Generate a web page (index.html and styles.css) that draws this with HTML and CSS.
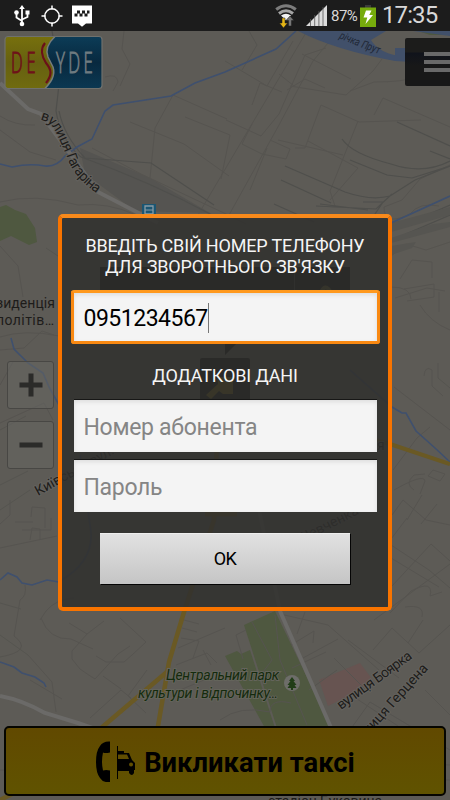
FILE: index.html
```html
<!DOCTYPE html>
<html lang="uk">
<head>
    <meta charset="UTF-8">
    <meta name="viewport" content="width=device-width, initial-scale=1.0">
    <title>DeSyde таксі</title>
    <link rel="stylesheet" href="styles.css">
</head>
<body>

<div class="screen">
    <header class="status-bar">
        <div class="status-left">
            <svg width="16" height="22" viewBox="0 0 16 22">
                <g fill="none" stroke="#fff" stroke-width="1.8"><path d="M8 3v15M2.500 8v4.500L8 16M13.500 9v3L8 14.500"/></g>
                <path d="M8 0l2.800 4H5.200zM11.500 5.500h4V9.500h-4z" fill="#fff"/>
                <circle cx="2.500" cy="7.500" r="2.300" fill="#fff"/><circle cx="8" cy="19" r="2.300" fill="#fff"/>
            </svg>
            <svg width="22" height="22" viewBox="0 0 22 22" fill="none" stroke="#fff">
                <circle cx="11" cy="11" r="7.200" stroke-width="1.500"/>
                <path d="M11 0.500v4M11 17.500v4M0.500 11h4M17.500 11h4" stroke-width="1.500"/>
            </svg>
            <svg width="22" height="22" viewBox="0 0 22 22">
                <path d="M1 0.500h20v18h-6l-4 3.200-4-3.200H1z" fill="#fff"/>
                <path d="M6 5.500h3v3H6zM11 5.500h3v3h-3zM3.500 8.500h3v3h-3zM8.500 8.500h3v3h-3zM13.500 8.500h3v3h-3zM16 5.500h2.500v3H16z" fill="#1c1c1c"/>
            </svg>
        </div>
        <div class="status-right">
            <svg width="22" height="24" viewBox="0 0 22 24">
                <g fill="none" stroke-width="3"><path d="M1.200 5.500Q11-2 20.800 5.500" stroke="#7c7c7c"/><path d="M4 9.500Q11 4 18 9.500" stroke="#a5a5a5"/></g>
                <path d="M6 11.500q5-3.500 10 0l-5 5z" fill="#f2f2f2"/>
                <path d="M7 14h3v5h2.500l-4 5-4-5H7z" fill="#e3b416" stroke="#1c1c1c" stroke-width=".5"/>
                <path d="M13.500 22v-5.500H11l4-4.500 4 4.500h-2.500V22z" fill="#777" stroke="#1c1c1c" stroke-width=".5"/>
            </svg>
            <svg class="signal" width="21" height="21" viewBox="0 0 21 21">
                <path d="M0 21L21 0v21z" fill="#dcdcdc"/>
                <path d="M4.500 14v7M8.700 10v11M12.900 6v15M17 2v19" stroke="#555" stroke-width=".8"/>
            </svg>
            <span class="battery-level">87%</span>
            <svg width="16" height="22" viewBox="0 0 16 22">
                <path d="M5 0h6v3H5z" fill="#3c3c3c"/>
                <path d="M0 2.500h16v19.500H0z" fill="#76ab0c"/>
                <path d="M6 5.500h5.500L9.300 10H13l-7.500 9 1.800-6.500H3.500z" fill="#fff"/>
            </svg>
            <span class="clock">17:35</span>
        </div>
    </header>

    <main class="map">
        <svg class="map-canvas" width="450" height="769" viewBox="0 31 450 769">
            <!-- парки та будівлі -->
            <g fill="#4f5840">
                <path d="M0 207l6-2 9 5 11 4 9 14 2 14-8 3-18-9-11 5z"/>
                <path d="M244 625l31-14 58 120h-55z"/>
                <path d="M225 656l12-5 4 3 9-4 25 78h-10z"/>
                <path d="M418 31h32v4h-20z"/>
            </g>
            <path d="M319 680l41-17 15 20-47 23z" fill="#675451"/>
            <path d="M80 148l70 30 60 35-75-2-50-37z" fill="#555451"/>

            <!-- дрібні вулиці -->
            <g class="minor-roads">
                <path d="M0 116q15 10 35 9M105 77q12-4 13 5l-5 9M124 31l-2 18 8 15-10 22M0 130l30 22 26 8M0 202q35-9 78 3 30-3 58 10M0 246l18 20 5 31M58 256l-12-8M92 148l49 26 85 40 20 10M150 178l5-50 18-33 54 24M130 122l54 22 45 32M185 117l45 18-9 44"/>
                <path d="M198 215l45-76 64-108M229 215l50-90 34-64 25-30M226 120l35 16 18-22 26-59 21-7M225 61l42 25 26-45M249 31l8 14-15 25M287 90l18-11 20 9M252 124l-10 20 20 10 24 5 4-10-20-9M308 141l50 27-28 32M278 140l65 15M321 105l-16 43-10 0M321 105l38 17 62-2M358 121l-18 45-10 25 5 15M250 190l17-42M302 54l49 25M290 86l56 9 27-24 9-12M294 86l-15-12M252 105l8-22 22 9M350 91l24-9q30 0 42-5l34 5M374 115l9-17 67 29"/>
                <path d="M450 165l-30 14-18 21-18 7q0 20 26 7 9-12 29-8M391 256l15-12 20 6 24-8M400 279l12-19 20 2v16M395 298l32-10 18 3M404 289l30-5v13l-27 4M391 287q20 0 20 12M439 292v20M420 305q10 17 30 25M424 376q1-11 8-6v16l11 10M438 363v15l12 10M394 387l56 43M393 470l24-32 13-11M407 520l15-25M394 490q30-17 31-9l-5 13M433 470l12 4-5 7-12-5zM414 490q-10-6 0-15l11-1M421 524l16-20"/>
                <path d="M392 515l11-15 23 20 24 5M407 518l-19 25 41 27 21 18M391 558l48 29M392 586l39-42 19 17M390 613l21-22q23-12 19 5l12-4M405 607q20-3 17 10M374 620l76-56M373 650l19-22 27 25 31-28M408 643l15-23M348 640l51 38M280 614l48 11 51 45M305 612l-8 22M291 645l23-14-1 12M303 658l35-19M292 668l34-16M309 690l28-20M334 658l31 31"/>
                <path d="M0 524l10-9v-15M15 522h18M22 530h29v-12M30 540l2-12 8 1v11M0 548l57-12M25 585q2 11-5 15l-6 36q20 15-14 21M0 603l21 6M40 620l6-9q10-12 28-13M41 618q8 22 30 21l22 10M69 623l18 11 17-13M87 634l-15 17 0 8 8 10q10 7 15 10l23-25 12-8M120 618l26 24-14 13-8 7H106l-10-6M103 676l18 13M90 718l31-28 10 8M147 670l-19 26 18 17M0 635l28 20 24 27 4 30M30 680l32 19M184 620l15 4M182 628l15 4M181 638l18 3-6 17M178 648l47-20M176 665l31-12 10 10M203 650l8 15M180 690l24-10"/>
                <path d="M0 337q25-8 59-1M0 350l24-2 18-17 12 4M0 423l44-20 9 17M0 430l26-14M0 510l30-20M0 485l28-14M31 517l1-10 13 1v20M0 385l13-23M252 622l20 38-15 20M246 630l-10 5 7 24M275 615l5 45 27 65M220 720q20-15 50-8 0-14 21-9M350 730l20-28 80 48M354 697l44 29M425 690l25 25M370 760l80 5M0 770l450 10"/>
            </g>
            <g class="rails">
                <path d="M52 31l8 45-4 35q5 30 25 46 70 25 131 58"/>
                <path d="M59 111q5 25 26 47l66 5 63 42M397 122l53 24M430 151l20 8M342 139q10 15 49 25 32 11 59-3M350 160l37 15 25 3 38-12M285 166l60 26q26 9 45 4l25-16 35-14M281 180l50 23M274 204l40 18M320 204l48 6M316 206l60 3 16-15M363 202h20l-10 15M392 230l58-25M392 240l58-25"/>
            </g>
            <path d="M391 223l59-16v8l-59 17zM391 238l42-14 17-2v5l-59 16zM391 246l25-4-4 6-21 7z" fill="#565551"/>

            <!-- річки -->
            <path d="M298 31h88l-15 9q8 14 34 17v4h-10q-60-11-97-30z" fill="#41506a"/>
            <path d="M395 48h55v11q-30 4-55 2zM413 31h37v5z" fill="#41506a"/>
            <g class="streams">
                <path d="M296 31l-20 18-51 23-30 11-24 13-58 9-8 6-13 28-15 8-12 9q-8 11-20 10-15-3-33 1L0 164"/>
                <path d="M391 223l59-27M0 580l8-7 9 4 5 6 10 2 15-5 12 2M0 662l14 5 8 6 13 4 9 6 2 4M11 338l3 11 8 8 6 6 15 10 6 14 10 18 1 12M350 370l42 37 10 6h4l10 18 19 17 15 14M80 455l10 70q7 35-30 56"/>
            </g>

            <!-- головні дороги -->
            <g class="roads">
                <path d="M0 83l28 26 13 5 57 78 60 31" stroke-width="4"/>
                <path d="M0 696q22 4 45 17l33 10 20 7M280 611l52 119M257 500l23 111" stroke-width="4"/>
            </g>
            <g class="highways">
                <path d="M217 440l-3 80-30 92-15 50-12 70" stroke-width="4.500"/>
                <path d="M168 671l-68 58M0 800l20-10" stroke-width="4.500"/>
                <path d="M360 436l30 8 60 20" stroke-width="4"/>
                <path d="M205 513h32" stroke-width="7"/>
            </g>

            <!-- підписи -->
            <defs>
                <path id="gagarina" d="M40 120Q51 120 59 139L67 157Q74 179 102 197"/>
                <path id="river" d="M339 38Q360 48 395 59"/>
            </defs>
            <text class="street"><textPath href="#gagarina" textLength="96">вулиця Гагаріна</textPath></text>
            <text class="river-name"><textPath href="#river" textLength="43" lengthAdjust="spacingAndGlyphs">річка Прут</textPath></text>
            <text class="place" x="-4" y="308" textLength="59">зиденція</text>
            <text class="place" x="-4" y="325" textLength="58">політів…</text>
            <text class="street" transform="translate(38 496) rotate(-29)">Київська вул.</text>
            <text class="street" transform="translate(300 544) rotate(-27)">Шевченка</text>
            <text class="street" transform="translate(377 450)">я</text>
            <text class="street" transform="translate(341 710) rotate(-36)" textLength="89">вулиця Боярка</text>
            <text class="street" transform="translate(359 746) rotate(-48)" textLength="104">вулиця Герцена</text>
            <text class="park" x="166" y="680" textLength="113">Центральний парк</text>
            <text class="park" x="138" y="698" textLength="140">культури і відпочинку…</text>
            <text class="place" x="268" y="806" textLength="114">стадіон Буковина</text>
            <circle cx="292" cy="683" r="8" fill="#6d6d69"/>
            <path d="M292 677l3 4h-1.500l3 4h-2l2 3h-3.500v2h-2v-2h-3.500l2-3h-2l3-4h-1.500z" fill="#213d17"/>
            <path d="M142 204h14v14h-14z" fill="#1b5673"/>
            <path d="M145 206h8v8h-8z" fill="none" stroke="#899ba5" stroke-width="1.300"/>
            <path d="M145 210h8M146 216h6" stroke="#899ba5"/>

            <!-- панель адреси та мітка водія -->
            <path d="M100 267h250v63H100zM225 343h12l-12 12z" fill="#070707"/>
            <path d="M294.500 267v62" stroke="#333"/>
            <path d="M320 295q5-14 11-2l-9 18" fill="none" stroke="#59501c" stroke-width="4"/>
            <rect x="200" y="358" width="50" height="48" rx="2" fill="#070707"/>
            <path d="M206 395l12-11-1-7h16v17h-10l-4-3-8 8z" fill="#6b5905"/>
        </svg>

        <div class="map-ui">
            <div class="top-row">
                <svg class="logo" width="99" height="56" viewBox="0 0 99 56">
                    <defs>
                        <linearGradient id="logoBlue" x2="0" y2="1"><stop stop-color="#0c3c57"/><stop offset=".5" stop-color="#08293f"/><stop offset="1" stop-color="#0b3852"/></linearGradient>
                        <linearGradient id="logoYellow" x2="0" y2="1"><stop stop-color="#77700d"/><stop offset=".5" stop-color="#666010"/><stop offset="1" stop-color="#706b10"/></linearGradient>
                    </defs>
                    <rect x="1" y="1.500" width="97" height="52" rx="3" fill="url(#logoBlue)"/>
                    <path d="M4 1.500H51C44 8 41 14 44 22L49 32C52 41 46 48 41 53.500H4Q1 53.500 1 50V5Q1 1.500 4 1.500z" fill="url(#logoYellow)"/>
                    <path d="M51 1.500C44 8 41 14 44 22L49 32C52 41 46 48 41 53.500" fill="none" stroke="#777c7c" stroke-width="1.500"/>
                    <rect x="1" y="1.500" width="97" height="52" rx="3" fill="none" stroke="#70716d" stroke-width="1.200"/>
                    <path d="M41 8C36 14 38 22 42 28C48 35 48 40 42 48" fill="none" stroke="#6b1019" stroke-width="2.200"/>
                    <text class="logo-text logo-red" transform="translate(7 38) scale(.55 1)" letter-spacing="7">DE</text>
                    <text class="logo-text logo-gray" transform="translate(52 38) scale(.56 1)" letter-spacing="6">YDE</text>
                </svg>
                <button class="menu-button"><span></span><span></span><span></span></button>
            </div>
            <div class="zoom-controls">
                <button class="zoom-button"><svg width="24" height="24" viewBox="0 0 24 24"><path d="M0.500 12h23M12 0.500v23"/></svg></button>
                <button class="zoom-button"><svg width="24" height="24" viewBox="0 0 24 24"><path d="M0.500 12h23"/></svg></button>
            </div>
            <button class="call-button">
                <svg width="40" height="41" viewBox="0 0 40 41">
                    <path d="M15 0.500v11q-5 1-7 0-2 9 0 18 3-1 7 0v11.500q-7 1-10-4Q1 32 1 21T5 5Q8 0 15 0.500z"/>
                    <path d="M22.500 5v33" stroke="#000" stroke-width="1" fill="none"/>
                    <path fill-rule="evenodd" d="M23 12v-2h6v2h5l3 7 3 3v7h-1v3q-2 4-5 0v-2H23V18h11l-2-4.500h-9zM36 21.500a2 2 0 1 0 .1 4 2 2 0 0 0-.1-4z"/>
                </svg>
                <span>Викликати таксі</span>
            </button>
        </div>

        <form class="dialog">
            <label class="dialog-title" for="phone">ВВЕДІТЬ СВІЙ НОМЕР ТЕЛЕФОНУ<br>ДЛЯ ЗВОРОТНЬОГО ЗВ'ЯЗКУ</label>
            <div class="field field-focused" id="phone">0951234567<span class="caret"></span></div>
            <div class="dialog-subtitle">ДОДАТКОВІ ДАНІ</div>
            <input class="field" type="text" placeholder="Номер абонента">
            <input class="field" type="password" placeholder="Пароль">
            <button class="ok-button" type="button">OK</button>
        </form>
    </main>
</div>

</body>
</html>
```

FILE: styles.css
```css
* {
    box-sizing: border-box;
}
body {
    margin: 0;
    font-family: Roboto, "Noto Sans", sans-serif;
    background-color: #1c1c1c;
}
button, input {
    font-family: inherit;
    border: none;
    padding: 0;
}
.screen {
    display: flex;
    flex-direction: column;
    width: 450px;
    height: 800px;
    overflow: hidden;
}
.status-bar {
    display: flex;
    justify-content: space-between;
    flex: 0 0 31px;
    padding: 0 13px 0 14px;
    background-color: #1c1c1c;
    color: #d8d8d8;
}
.status-left, .status-right {
    display: flex;
    align-items: center;
}
.status-left {
    gap: 8px;
}
.status-left svg:first-child {
    margin-right: 3px;
}
.status-right .signal {
    margin: 0 4px 0 9px;
}
.battery-level {
    width: 28px;
    margin-right: 1px;
    font-size: 15px;
    letter-spacing: -0.5px;
}
.clock {
    width: 55px;
    margin-left: 6px;
    font-size: 24px;
    line-height: 31px;
    letter-spacing: -0.9px;
}
.map {
    position: relative;
    flex: 1;
    background-color: #5d5b56;
}
.map-canvas {
    position: absolute;
    top: 0;
    left: 0;
}
.minor-roads, .rails, .streams, .roads, .highways {
    fill: none;
}
.minor-roads {
    stroke: #565450;
}
.rails {
    stroke: #4f4f4c;
    stroke-width: 1.2;
}
.streams {
    stroke: #3f506e;
    stroke-width: 1.6;
}
.roads {
    stroke: #6b6a68;
}
.highways {
    stroke: #6a5924;
}
.street, .place {
    font-size: 14px;
    fill: #1d1c1a;
}
.street {
    paint-order: stroke;
    stroke: #64625e;
    stroke-width: 2px;
}
.river-name {
    font-size: 11px;
    font-style: italic;
    fill: #202735;
}
.park {
    font-size: 14px;
    font-style: italic;
    fill: #142b0d;
    paint-order: stroke;
    stroke: #64645b;
    stroke-width: 2px;
}
.map-ui {
    position: relative;
    display: flex;
    flex-direction: column;
    height: 100%;
    padding: 4px;
}
.top-row {
    display: flex;
    justify-content: space-between;
    align-items: flex-start;
    margin-right: -4px;
}
.logo-text {
    font-family: "Open Sans", sans-serif;
    font-size: 30px;
    font-weight: 300;
    stroke-width: 1;
}
.logo-red {
    fill: #6e1219;
    stroke: #6e1219;
}
.logo-gray {
    fill: #6f7b80;
    stroke: #6f7b80;
}
.menu-button {
    display: flex;
    flex-direction: column;
    gap: 4px;
    width: 45px;
    height: 48px;
    margin-top: 3px;
    padding: 14px 0 0 19px;
    background: linear-gradient(#1c1c1b 14px, #10131b 15px, #181818 28px);
    border-radius: 2px 0 0 2px;
}
.menu-button span {
    width: 100%;
    height: 4px;
    background-color: #696969;
}
.zoom-controls {
    display: flex;
    flex-direction: column;
    gap: 12px;
    margin: 270px 0 0 3px;
}
.zoom-button {
    display: flex;
    align-items: center;
    justify-content: center;
    width: 47px;
    height: 48px;
    background-color: rgba(102, 102, 99, 0.55);
    border: 1px solid #484744;
    border-radius: 3px;
}
.zoom-button path {
    fill: none;
    stroke: #2b2b29;
    stroke-width: 5;
}
.call-button {
    display: flex;
    align-items: center;
    justify-content: center;
    gap: 9px;
    height: 70px;
    margin-top: auto;
    background: linear-gradient(#614900, #605300);
    border: 2px solid #050500;
    border-radius: 5px;
    font-size: 27.4px;
    font-weight: 700;
    color: #000;
}
.call-button span {
    padding-top: 3px;
}
.dialog {
    position: absolute;
    top: 183px;
    left: 58px;
    display: flex;
    flex-direction: column;
    align-items: center;
    width: 334px;
    height: 397px;
    padding: 17px 0 0;
    background: rgba(48, 48, 46, 0.87) padding-box;
    border: 4px solid #f97400;
    border-top-color: #f98a1b;
    border-radius: 5px;
    color: #f5f5f5;
}
.dialog-title, .dialog-subtitle {
    font-size: 18px;
    line-height: 21px;
    letter-spacing: -0.17px;
    text-align: center;
    white-space: nowrap;
}
.dialog-subtitle {
    margin: 21px 0 14px;
}
.field {
    width: 303px;
    height: 52px;
    padding: 2px 10px 0;
    background-color: #f4f4f4;
    box-shadow: inset 0 2px 4px #ddd, 0 -1px 0 #171716;
    font-size: 23px;
    letter-spacing: -0.3px;
    color: #000;
}
.field::placeholder {
    color: #858585;
    opacity: 1;
}
.field + .field {
    margin-top: 8px;
}
.field-focused {
    display: flex;
    align-items: center;
    width: 309px;
    height: 54px;
    margin-top: 13px;
    border: 3px solid #f98912;
    border-top-color: #ff991e;
    border-radius: 3px;
    box-shadow: inset 0 2px 4px #ddd;
    letter-spacing: -0.5px;
}
.caret {
    width: 1px;
    height: 30px;
    background-color: #777;
}
.ok-button {
    width: 250px;
    height: 51px;
    margin-top: 21px;
    background: linear-gradient(#e2e2e2, #c5c5c5);
    box-shadow: 1px 1px 0 #050505, inset 0 1px 0 #eee;
    font-size: 18px;
    letter-spacing: -0.5px;
    color: #000;
}
```
